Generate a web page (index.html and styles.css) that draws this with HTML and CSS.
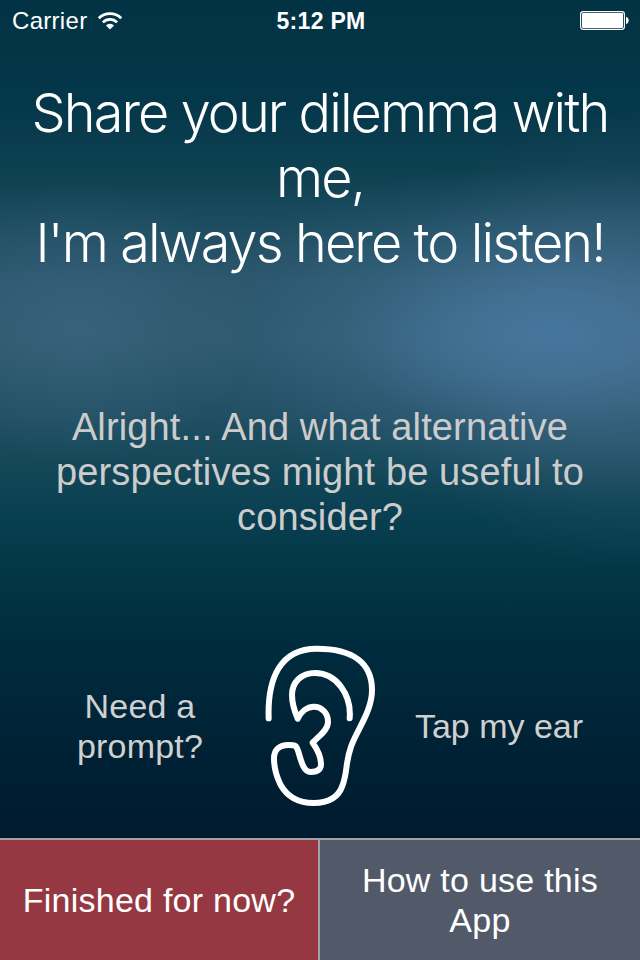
FILE: index.html
```html
<!DOCTYPE html>
<html lang="en">
<head>
<meta charset="UTF-8">
<meta name="viewport" content="width=device-width, initial-scale=1.0">
<title>Listening Ear</title>
<link rel="stylesheet" href="styles.css">
</head>
<body>
<div class="statusbar">
    <div class="carrier">
        <span class="carrier-name">Carrier</span>
        <svg class="wifi" viewBox="0 0 26 18" width="26" height="18">
            <path d="M1.8 6.2 A16 16 0 0 1 24.2 6.2" fill="none" stroke="#fff" stroke-width="2.9"/>
            <path d="M5.9 10.4 A10 10 0 0 1 20.1 10.4" fill="none" stroke="#fff" stroke-width="2.7"/>
            <path d="M8.9 13.4 A5.8 5.8 0 0 1 17.1 13.4 L13 17.6 Z" fill="#fff"/>
        </svg>
    </div>
    <div class="time">5:12 PM</div>
    <svg class="battery" viewBox="0 0 50 20" width="50" height="20">
        <rect x="0.6" y="0.6" width="43.8" height="17.8" rx="2.6" fill="none" stroke="#fff" stroke-width="1.1"/>
        <rect x="2" y="2" width="41" height="15" rx="1.2" fill="#fff"/>
        <path d="M46 6 C49.6 6.3 49.6 12.7 46 13 Z" fill="#fff"/>
    </svg>
</div>
<h1 class="title">
    <span class="line">Share your dilemma with</span>
    <span class="line">me,</span>
    <span class="line">I'm always here to listen!</span>
</h1>
<p class="prompt">Alright... And what alternative<br>perspectives might be useful to<br>consider?</p>
<div class="ear-row">
    <div class="hint">Need a<br>prompt?</div>
    <svg class="ear" viewBox="0 0 420 540" width="140" height="180">
        <path d="M56 250 C52 128 92 41 200 41 C310 41 366 85 366 165 C366 230 320 285 303 335 C285 385 294 405 278 450 C265 490 230 504 190 504 C150 504 115 490 92 450 C78 422 72 400 72 370 C72 345 88 330 115 330 C136 330 139 330 145 350 C155 385 162 411 182 411 C206 411 214 400 213 385 C212 360 200 340 188 323 C210 300 234 285 234 260 C234 235 215 215 192 215 C170 215 152 232 143 251 C130 220 126 200 126 180 C126 140 155 114 195 114 C260 114 305 180 299 250"/>
    </svg>
    <div class="hint hint-right">Tap my ear</div>
</div>
<div class="buttons">
    <div class="button finish">Finished for now?</div>
    <div class="button help">How to use this<br>App</div>
</div>
</body>
</html>
```
FILE: styles.css
```css
* {
    box-sizing: border-box;
}
body {
    margin: 0;
    height: 960px;
    display: flex;
    flex-direction: column;
    overflow: hidden;
    font-family: "Liberation Sans", Arial, sans-serif;
    color: #ffffff;
    text-align: center;
    background:
        radial-gradient(ellipse 380px 170px at 550px 335px, rgba(76,126,170,0.75) 0, rgba(76,126,168,0.6) 25%, rgba(72,120,155,0.3) 55%, rgba(72,120,150,0.09) 82%, rgba(72,120,150,0) 100%),
        radial-gradient(ellipse 260px 230px at 640px 340px, rgba(70,100,130,0.45) 0, rgba(70,100,130,0.32) 45%, rgba(70,100,130,0.1) 78%, rgba(70,100,130,0) 100%),
        radial-gradient(ellipse 180px 140px at 80px 325px, rgba(68,112,138,0.45) 0, rgba(68,112,138,0.25) 45%, rgba(68,112,138,0) 100%),
        linear-gradient(#023344 0, #05374a 100px, #0d4051 170px, #1d4c60 225px, #2a556b 280px, #2c576c 340px, #245065 400px, #154859 460px, #083f50 520px, #023545 580px, #002c3f 640px, #002538 710px, #001a2e 838px);
}
.statusbar {
    height: 42px;
    padding: 0 10px 0 12px;
    display: grid;
    grid-template-columns: 1fr auto 1fr;
    align-items: center;
}
.carrier {
    display: flex;
    align-items: center;
    gap: 10px;
    font-size: 24px;
}
.carrier-name {
    letter-spacing: 0.3px;
}
.time {
    font-size: 23px;
    font-weight: bold;
    letter-spacing: 0.3px;
}
.battery {
    justify-self: end;
}
.title {
    margin: 38px 0 0;
    font-family: Inter, "Liberation Sans", sans-serif;
    font-size: 54px;
    font-weight: 300;
    line-height: 65px;
    height: 195px;
}
.line {
    display: block;
    white-space: nowrap;
    letter-spacing: -1.9px;
}
.prompt {
    margin: 130px 0 0;
    font-size: 38px;
    line-height: 45px;
    letter-spacing: 0.13px;
    color: #cccccc;
    height: 135px;
}
.ear-row {
    margin-top: 95px;
    height: 203px;
    display: grid;
    grid-template-columns: 250px 140px 250px;
    align-items: start;
}
.hint {
    height: 182px;
    padding-left: 30px;
    display: flex;
    align-items: center;
    justify-content: center;
    font-size: 34px;
    line-height: 40px;
    letter-spacing: 0.2px;
    color: #d0d0d0;
}
.hint-right {
    padding: 0 32px 0 0;
    letter-spacing: 0;
}
.ear path {
    fill: none;
    stroke: #ffffff;
    stroke-width: 18;
    stroke-linecap: round;
    stroke-linejoin: round;
}
.buttons {
    height: 122px;
    display: flex;
    border-top: 2px solid #a0a4a8;
}
.button {
    width: 320px;
    display: flex;
    align-items: center;
    justify-content: center;
    font-size: 34px;
    line-height: 40px;
    letter-spacing: 0.25px;
}
.finish {
    background-color: #953842;
    border-right: 2px solid #a0a4a8;
}
.help {
    background-color: #525a69;
}
```
